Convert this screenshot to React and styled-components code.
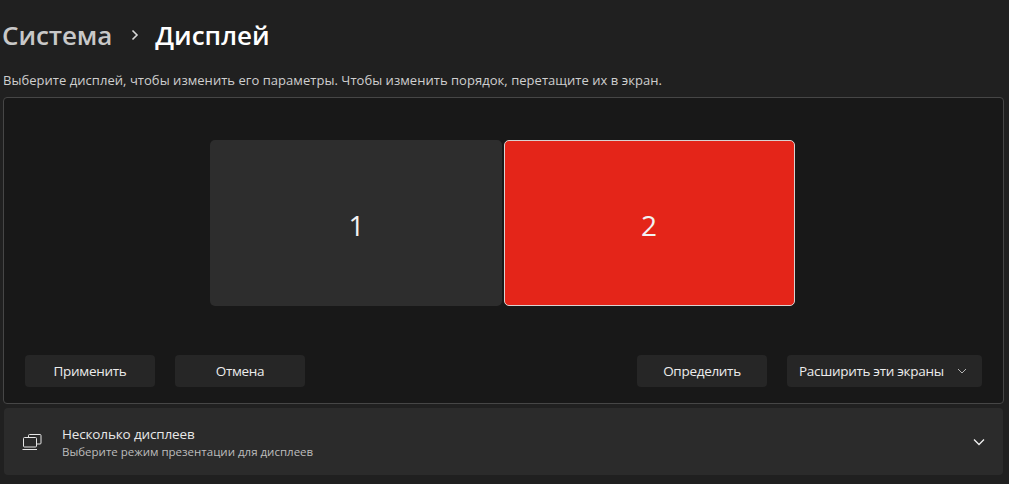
import React from "react";
import styled, { createGlobalStyle } from "styled-components";

const GlobalStyle = createGlobalStyle`
    html, body {
        margin: 0;
        padding: 0;
        height: 100%;
        background: #202020;
        overflow: hidden;
    }
    * {
        box-sizing: border-box;
    }
`;

const Page = styled.div`
    width: 1009px;
    height: 484px;
    padding: 0 5px 0 3px;
    background: #202020;
    font-family: "Open Sans", "Noto Sans", sans-serif;
    color: #fff;
`;

const Breadcrumb = styled.div`
    display: flex;
    align-items: center;
    height: 71px;
    padding-bottom: 2px;
    margin-left: -1px;
`;

const Crumb = styled.span`
    font-size: 26px;
    font-weight: 600;
    line-height: 36px;
    letter-spacing: ${(props) => (props.$current ? "0" : "-0.1px")};
    color: ${(props) => (props.$current ? "#ffffff" : "#c8c8c8")};
`;

const CrumbArrow = styled.svg`
    width: 10px;
    height: 12px;
    margin: 0 15px 0 18px;
    fill: none;
    stroke: #d8d8d8;
    stroke-width: 1.6;
`;

const Hint = styled.div`
    font-size: 13px;
    line-height: 18px;
    height: 26px;
    color: #cfcfcf;
    letter-spacing: 0.04px;
`;

const Panel = styled.div`
    height: 307px;
    background: #181818;
    border: 1px solid #464646;
    border-radius: 4px;
    padding: 42px 21px 0 21px;
`;

const Screens = styled.div`
    display: flex;
    justify-content: center;
    gap: 2px;
    margin-right: 2px;
`;

const Screen = styled.div`
    width: ${(props) => (props.$active ? "291px" : "292px")};
    height: 166px;
    display: flex;
    align-items: center;
    justify-content: center;
    padding: ${(props) => (props.$active ? "3px 1px 0 0" : "3px 0 0 1px")};
    border-radius: 5px;
    font-size: 28px;
    color: #f2f2f2;
    background: ${(props) => (props.$active ? "#e42519" : "#2d2d2d")};
    border: ${(props) => (props.$active ? "1px solid #d9d2d0" : "none")};
`;

const Actions = styled.div`
    display: flex;
    justify-content: space-between;
    margin-top: 49px;
`;

const ButtonGroup = styled.div`
    display: flex;
    gap: 20px;
`;

const Button = styled.div`
    width: ${(props) => props.$width || "130px"};
    height: 32px;
    display: flex;
    align-items: center;
    justify-content: ${(props) => (props.$select ? "space-between" : "center")};
    padding: ${(props) => (props.$select ? "0 15px 0 12px" : "0")};
    background: #262626;
    border-radius: 4px;
    font-size: 13.5px;
    color: #ececec;
    letter-spacing: -0.3px;
`;

const Chevron = styled.svg`
    width: ${(props) => props.$size}px;
    height: ${(props) => props.$size}px;
    fill: none;
    stroke: ${(props) => props.$color};
    stroke-width: ${(props) => props.$stroke};
`;

const Row = styled.div`
    display: flex;
    align-items: center;
    height: 67px;
    margin: 4px 1px 0 1px;
    padding: 0 18px 0 18px;
    background: #2b2b2b;
    border-radius: 4px;
`;

const RowIcon = styled.svg`
    width: 20px;
    height: 18px;
    fill: none;
    stroke: #e6e6e6;
    stroke-width: 1;
    margin-right: 20px;
`;

const RowText = styled.div`
    flex: 1;
    display: flex;
    flex-direction: column;
    padding-top: 1px;
`;

const RowTitle = styled.div`
    font-size: 13.5px;
    line-height: 18px;
    color: #e8e8e8;
    letter-spacing: -0.15px;
`;

const RowSubtitle = styled.div`
    font-size: 11.5px;
    line-height: 16px;
    padding-top: 1px;
    box-sizing: content-box;
    color: #bdbdbd;
`;

const App = () => {
    return (
        <Page>
            <GlobalStyle />
            <Breadcrumb>
                <Crumb>Система</Crumb>
                <CrumbArrow viewBox="0 0 10 12">
                    <path d="M2.5 1.5 L7 6 L2.5 10.5" />
                </CrumbArrow>
                <Crumb $current>Дисплей</Crumb>
            </Breadcrumb>
            <Hint>
                Выберите дисплей, чтобы изменить его параметры. Чтобы изменить
                порядок, перетащите их в экран.
            </Hint>
            <Panel>
                <Screens>
                    <Screen>1</Screen>
                    <Screen $active>2</Screen>
                </Screens>
                <Actions>
                    <ButtonGroup>
                        <Button>Применить</Button>
                        <Button>Отмена</Button>
                    </ButtonGroup>
                    <ButtonGroup>
                        <Button>Определить</Button>
                        <Button $select $width="195px">
                            Расширить эти экраны
                            <Chevron
                                $size={10}
                                $color="#b5b5b5"
                                $stroke={1}
                                viewBox="0 0 10 10"
                            >
                                <path d="M1 3 L5 7 L9 3" />
                            </Chevron>
                        </Button>
                    </ButtonGroup>
                </Actions>
            </Panel>
            <Row>
                <RowIcon viewBox="0 0 20 18">
                    <path d="M6.5 4 V2.5 a1 1 0 0 1 1-1 H18 a1 1 0 0 1 1 1 V10 a1 1 0 0 1-1 1 H15" />
                    <rect x="1.5" y="4.5" width="13" height="9.5" rx="1" />
                    <path d="M0.5 16.5 H15" />
                </RowIcon>
                <RowText>
                    <RowTitle>Несколько дисплеев</RowTitle>
                    <RowSubtitle>Выберите режим презентации для дисплеев</RowSubtitle>
                </RowText>
                <Chevron
                    $size={12}
                    $color="#f0f0f0"
                    $stroke={1.3}
                    viewBox="0 0 12 12"
                >
                    <path d="M1 3.5 L6 8.5 L11 3.5" />
                </Chevron>
            </Row>
        </Page>
    );
};

export default App;
